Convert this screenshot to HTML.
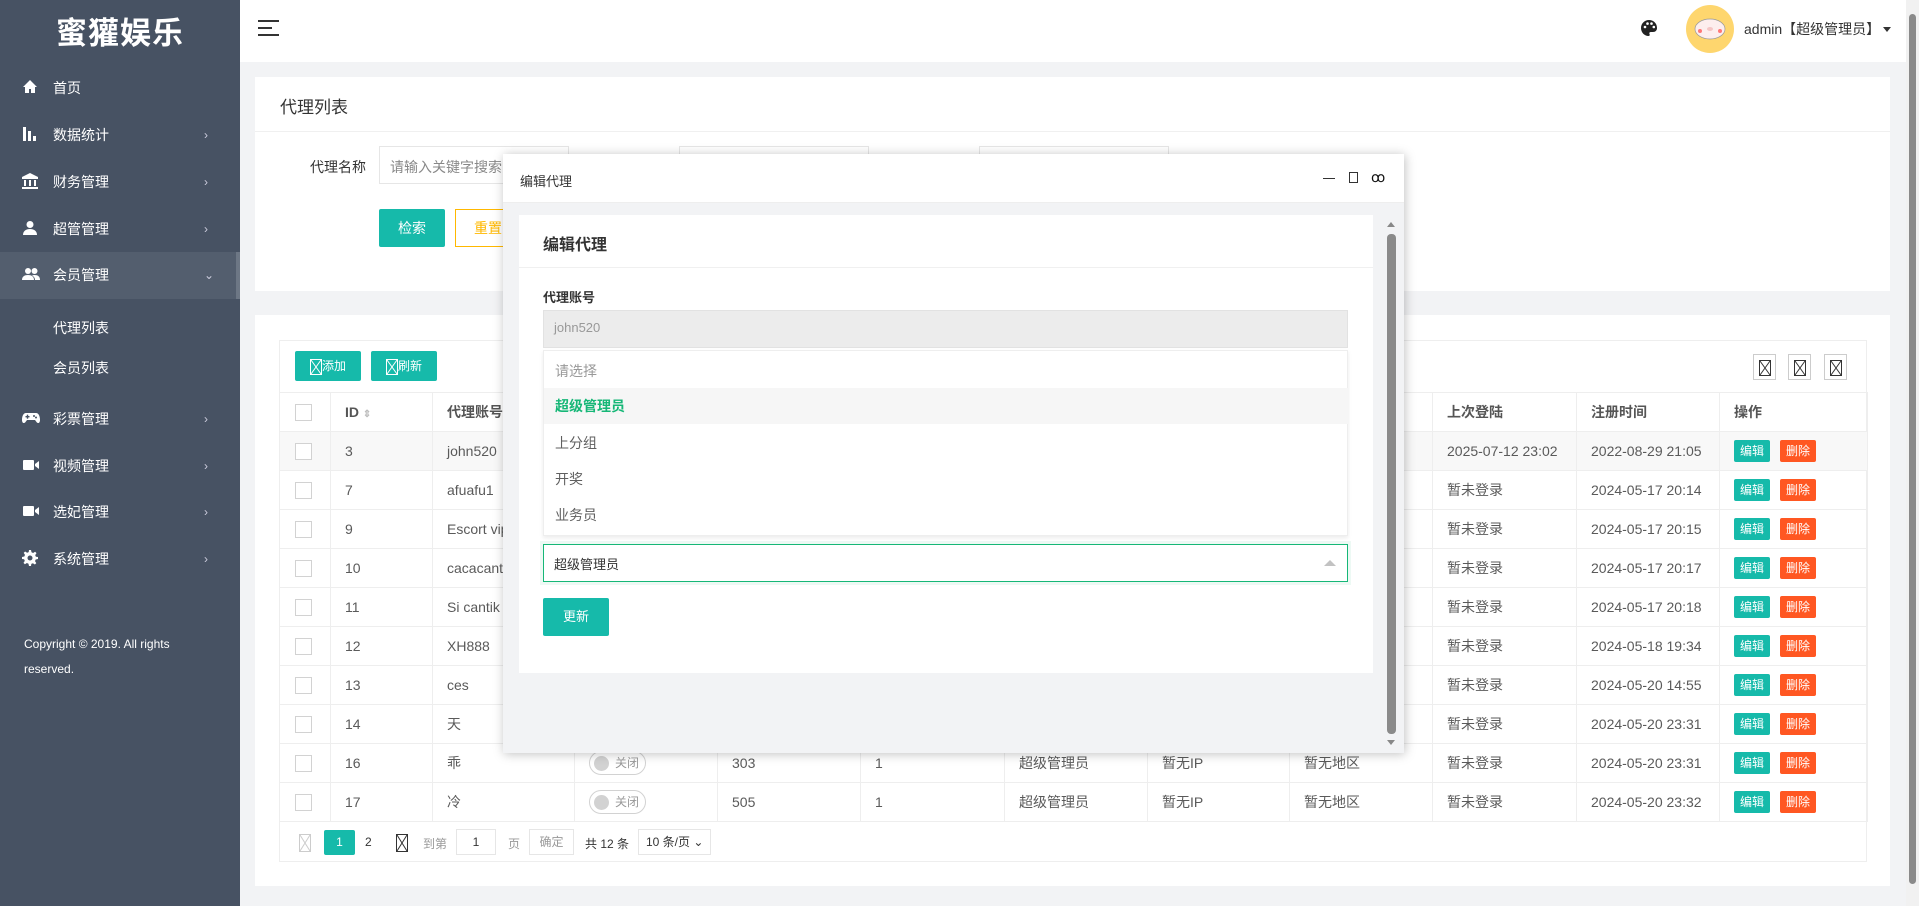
<!DOCTYPE html>
<html><head><meta charset="utf-8">
<style>
*{box-sizing:border-box;margin:0;padding:0}
body{width:1919px;height:906px;overflow:hidden;background:#f2f3f5;font-family:"Liberation Sans","Noto Sans CJK SC",sans-serif;font-size:14px;color:#333;position:relative}
.abs{position:absolute}
#side{left:0;top:0;width:240px;height:906px;background:#475263}
.logo{left:0;top:8px;width:240px;text-align:center;color:#fff;font-size:31px;font-weight:bold;letter-spacing:1px}
.mi{left:0;width:240px;height:47px;color:#fff;font-size:14px;line-height:47px}
.mi .t{position:absolute;left:53px}
.mi svg{position:absolute;left:22px;top:14px}
.mi .ch{position:absolute;left:204px;font-size:12px;color:#ccd}
.sub{left:53px;color:#fff;font-size:14px}
#hdr{left:240px;top:0;width:1666px;height:62px;background:#fff}
.card{background:#fff}
.inp{border:1px solid #e6e6e6;background:#fff;height:38px}
.btn{color:#fff;background:#16baaa;text-align:center;border-radius:2px}
table{border-collapse:collapse;position:absolute;left:279px;top:392px;width:1588px;table-layout:fixed}
td,th{border:1px solid #eee;height:39px;padding:0 14px;text-align:left;white-space:nowrap;overflow:hidden;font-size:14px;color:#5a5a5a}
th{font-weight:bold;color:#555;height:39px}
.cb{display:inline-block;width:17px;height:17px;border:1px solid #d2d2d2;background:#fff;vertical-align:middle}
.be{display:inline-block;width:36px;height:22px;line-height:22px;background:#16baaa;color:#fff;font-size:12px;text-align:center;border-radius:2px;margin-right:10px}
.bd{display:inline-block;width:36px;height:22px;line-height:22px;background:#ff5722;color:#fff;font-size:12px;text-align:center;border-radius:2px}
.sw{display:inline-block;width:57px;height:24px;border:1px solid #d2d2d2;border-radius:12px;position:relative;vertical-align:middle;font-size:12px;color:#999;line-height:22px;padding-left:25px}
.sw:before{content:"";position:absolute;left:4px;top:4px;width:15px;height:15px;border-radius:50%;background:#d2d2d2}
.bx{display:inline-block;width:12px;height:16px;vertical-align:middle}
.opt{left:0;width:805px;height:36px;line-height:36px;padding-left:11px;font-size:14px;color:#5f5f5f}
</style></head><body>

<div id="side" class="abs">
  <div class="abs logo">蜜獾娱乐</div>
  <div class="abs mi" style="top:65px"><svg width="16" height="16" viewBox="0 0 16 16"><path d="M8 1L1 8h2v6h4v-4h2v4h4V8h2z" fill="#fff"/></svg><span class="t">首页</span></div>
  <div class="abs mi" style="top:112px"><svg width="16" height="16" viewBox="0 0 16 16"><rect x="1" y="1" width="3" height="14" fill="#fff"/><rect x="6" y="5" width="3" height="10" fill="#fff"/><rect x="11" y="10" width="3" height="5" fill="#fff"/></svg><span class="t">数据统计</span><span class="ch">›</span></div>
  <div class="abs mi" style="top:159px"><svg width="16" height="16" viewBox="0 0 16 16"><path d="M8 0L0 4v2h16V4z" fill="#fff"/><rect x="2" y="7" width="2" height="6" fill="#fff"/><rect x="7" y="7" width="2" height="6" fill="#fff"/><rect x="12" y="7" width="2" height="6" fill="#fff"/><rect x="0" y="14" width="16" height="2" fill="#fff"/></svg><span class="t">财务管理</span><span class="ch">›</span></div>
  <div class="abs mi" style="top:206px"><svg width="16" height="16" viewBox="0 0 16 16"><circle cx="8" cy="4.5" r="3.5" fill="#fff"/><path d="M1 15c0-4 3-6 7-6s7 2 7 6z" fill="#fff"/></svg><span class="t">超管管理</span><span class="ch">›</span></div>
  <div class="abs mi" style="top:252px;background:#535e6e;border-right:4px solid #6d7785"><svg width="18" height="16" viewBox="0 0 18 16"><circle cx="6" cy="5" r="3" fill="#fff"/><circle cx="12.5" cy="5" r="3" fill="#fff"/><path d="M0 14c0-3.5 2.5-5 6-5s6 1.5 6 5z" fill="#fff"/><path d="M10 9.5c1-.4 1.8-.5 2.5-.5 3.5 0 5.5 1.5 5.5 5h-5c0-2-1-3.5-3-4.5z" fill="#fff"/></svg><span class="t">会员管理</span><span class="ch">⌄</span></div>
  <div class="abs sub" style="top:318px">代理列表</div>
  <div class="abs sub" style="top:358px">会员列表</div>
  <div class="abs mi" style="top:396px"><svg width="18" height="16" viewBox="0 0 18 16"><path d="M4 3h10c2.5 0 4 3 4 7 0 3-2 4-3.5 2L13 10H5l-1.5 2C2 14 0 13 0 10c0-4 1.5-7 4-7z" fill="#fff"/><rect x="3.5" y="6" width="4" height="1.4" fill="#475263"/><rect x="4.8" y="4.7" width="1.4" height="4" fill="#475263"/><circle cx="12" cy="6" r="1" fill="#475263"/><circle cx="14" cy="7.5" r="1" fill="#475263"/></svg><span class="t">彩票管理</span><span class="ch">›</span></div>
  <div class="abs mi" style="top:443px"><svg width="18" height="16" viewBox="0 0 18 16"><rect x="1" y="3" width="11" height="10" rx="1" fill="#fff"/><path d="M13 7l4-3v8l-4-3z" fill="#fff"/></svg><span class="t">视频管理</span><span class="ch">›</span></div>
  <div class="abs mi" style="top:489px"><svg width="18" height="16" viewBox="0 0 18 16"><rect x="1" y="3" width="11" height="10" rx="1" fill="#fff"/><path d="M13 7l4-3v8l-4-3z" fill="#fff"/></svg><span class="t">选妃管理</span><span class="ch">›</span></div>
  <div class="abs mi" style="top:536px"><svg width="16" height="16" viewBox="0 0 16 16"><path d="M7 0h2l.5 2.3 1.6.7 2-1.3 1.4 1.4-1.3 2 .7 1.6L16 7v2l-2.3.5-.7 1.6 1.3 2-1.4 1.4-2-1.3-1.6.7L9 16H7l-.5-2.3-1.6-.7-2 1.3-1.4-1.4 1.3-2-.7-1.6L0 9V7l2.3-.5.7-1.6-1.3-2 1.4-1.4 2 1.3 1.6-.7z" fill="#fff"/><circle cx="8" cy="8" r="2.5" fill="#475263"/></svg><span class="t">系统管理</span><span class="ch">›</span></div>
  <div class="abs" style="left:24px;top:632px;color:#fff;font-size:12px;line-height:25px;width:180px">Copyright © 2019. All rights reserved.</div>
</div>

<div id="hdr" class="abs">
  <svg class="abs" style="left:18px;top:19px" width="22" height="18"><rect y="1" width="21" height="2" fill="#333"/><rect y="8" width="14" height="2" fill="#333"/><rect y="15" width="21" height="2" fill="#333"/></svg>
  <svg class="abs" style="left:1400px;top:19px" width="18" height="18" viewBox="0 0 18 18"><path d="M9 1C4.5 1 1 4.5 1 9s3.5 8 7.5 8c1.2 0 1.5-1 1-2-.5-1 0-2 1.3-2H13c2.5 0 4-1.7 4-4C17 4.3 13.5 1 9 1z" fill="#222"/><circle cx="5" cy="8" r="1.3" fill="#fff"/><circle cx="7.5" cy="4.6" r="1.3" fill="#fff"/><circle cx="11.5" cy="4.6" r="1.3" fill="#fff"/><circle cx="13.8" cy="8" r="1.3" fill="#fff"/></svg>
  <div class="abs" style="left:1446px;top:5px;width:48px;height:48px;border-radius:50%;background:#fed66e"></div>
  <svg class="abs" style="left:1452px;top:15px" width="36" height="26"><ellipse cx="18" cy="14" rx="15" ry="10" fill="#fdeeee" stroke="#999" stroke-width=".7"/><circle cx="8" cy="16" r="2" fill="#f77"/><circle cx="28" cy="16" r="2" fill="#f77"/><ellipse cx="18" cy="14" rx="3" ry="2" fill="#f5c6c6"/></svg>
  <div class="abs" style="left:1504px;top:19px;font-size:14px;color:#333">admin【超级管理员】</div>
  <div class="abs" style="left:1643px;top:27px;width:0;height:0;border-left:4px solid transparent;border-right:4px solid transparent;border-top:5px solid #333"></div>
</div>
<div class="abs" style="left:1906px;top:0;width:13px;height:906px;background:#f1f1f1"></div>
<div class="abs" style="left:1909px;top:14px;width:7px;height:870px;background:#8a8a8a;border-radius:4px"></div>

<div class="abs card" style="left:255px;top:77px;width:1635px;height:214px">
  <div class="abs" style="left:25px;top:16px;font-size:17px;color:#333">代理列表</div>
  <div class="abs" style="left:0;top:54px;width:1635px;height:1px;background:#f0f0f0"></div>
  <div class="abs" style="left:55px;top:80px;color:#333">代理名称</div>
  <div class="abs inp" style="left:124px;top:69px;width:190px;padding:10px;color:#888">请输入关键字搜索</div>
  <div class="abs inp" style="left:424px;top:69px;width:190px"></div>
  <div class="abs inp" style="left:724px;top:69px;width:190px"></div>
  <div class="abs btn" style="left:124px;top:132px;width:66px;height:38px;line-height:38px">检索</div>
  <div class="abs" style="left:200px;top:132px;width:66px;height:38px;line-height:36px;border:1px solid #ffb800;color:#ffb800;text-align:center">重置</div>
</div>

<div class="abs card" style="left:255px;top:315px;width:1635px;height:571px"></div>
<div class="abs" style="left:279px;top:340px;width:1588px;height:522px;border:1px solid #eee;background:#fff"></div>
<div class="abs btn" style="left:295px;top:351px;width:66px;height:30px;line-height:30px;font-size:12px"><svg class="bx" viewBox="0 0 12 16"><rect x=".5" y=".5" width="11" height="15" fill="none" stroke="#fff"/><path d="M1 1l10 14M11 1L1 15" stroke="#fff"/></svg>添加</div>
<div class="abs btn" style="left:371px;top:351px;width:66px;height:30px;line-height:30px;font-size:12px"><svg class="bx" viewBox="0 0 12 16"><rect x=".5" y=".5" width="11" height="15" fill="none" stroke="#fff"/><path d="M1 1l10 14M11 1L1 15" stroke="#fff"/></svg>刷新</div>
<div class="abs" style="left:1753px;top:354px;width:23px;height:26px;border:1px solid #ccc;text-align:center;padding-top:4px"><svg class="bx" viewBox="0 0 12 16"><rect x=".5" y=".5" width="11" height="15" fill="none" stroke="#333"/><path d="M1 1l10 14M11 1L1 15" stroke="#333"/></svg></div>
<div class="abs" style="left:1788px;top:354px;width:23px;height:26px;border:1px solid #ccc;text-align:center;padding-top:4px"><svg class="bx" viewBox="0 0 12 16"><rect x=".5" y=".5" width="11" height="15" fill="none" stroke="#333"/><path d="M1 1l10 14M11 1L1 15" stroke="#333"/></svg></div>
<div class="abs" style="left:1824px;top:354px;width:23px;height:26px;border:1px solid #ccc;text-align:center;padding-top:4px"><svg class="bx" viewBox="0 0 12 16"><rect x=".5" y=".5" width="11" height="15" fill="none" stroke="#333"/><path d="M1 1l10 14M11 1L1 15" stroke="#333"/></svg></div>

<table>
<colgroup><col style="width:51px"><col style="width:102px"><col style="width:142px"><col style="width:143px"><col style="width:143px"><col style="width:144px"><col style="width:143px"><col style="width:142px"><col style="width:143px"><col style="width:144px"><col style="width:143px"><col style="width:148px"></colgroup>
<tr><th style="padding-left:15px"><span class="cb"></span></th><th>ID <span style="color:#bbb;font-size:10px">⇕</span></th><th>代理账号</th><th>状态</th><th>邀请码</th><th>层级</th><th>角色</th><th>登录IP</th><th>登录地区</th><th>上次登陆</th><th>注册时间</th><th>操作</th></tr>
<tr style="background:#f8f8f8"><td style="padding-left:15px"><span class="cb"></span></td><td>3</td><td>john520</td><td><span class="sw">关闭</span></td><td>101</td><td>1</td><td>超级管理员</td><td>暂无IP</td><td>暂无地区…</td><td>2025-07-12 23:02</td><td>2022-08-29 21:05</td><td><span class="be">编辑</span><span class="bd">删除</span></td></tr>
<tr><td style="padding-left:15px"><span class="cb"></span></td><td>7</td><td>afuafu1</td><td><span class="sw">关闭</span></td><td>101</td><td>1</td><td>超级管理员</td><td>暂无IP</td><td>暂无地区</td><td>暂未登录</td><td>2024-05-17 20:14</td><td><span class="be">编辑</span><span class="bd">删除</span></td></tr>
<tr><td style="padding-left:15px"><span class="cb"></span></td><td>9</td><td>Escort vip</td><td><span class="sw">关闭</span></td><td>101</td><td>1</td><td>超级管理员</td><td>暂无IP</td><td>暂无地区</td><td>暂未登录</td><td>2024-05-17 20:15</td><td><span class="be">编辑</span><span class="bd">删除</span></td></tr>
<tr><td style="padding-left:15px"><span class="cb"></span></td><td>10</td><td>cacacantik</td><td><span class="sw">关闭</span></td><td>101</td><td>1</td><td>超级管理员</td><td>暂无IP</td><td>暂无地区</td><td>暂未登录</td><td>2024-05-17 20:17</td><td><span class="be">编辑</span><span class="bd">删除</span></td></tr>
<tr><td style="padding-left:15px"><span class="cb"></span></td><td>11</td><td>Si cantik</td><td><span class="sw">关闭</span></td><td>101</td><td>1</td><td>超级管理员</td><td>暂无IP</td><td>暂无地区</td><td>暂未登录</td><td>2024-05-17 20:18</td><td><span class="be">编辑</span><span class="bd">删除</span></td></tr>
<tr><td style="padding-left:15px"><span class="cb"></span></td><td>12</td><td>XH888</td><td><span class="sw">关闭</span></td><td>101</td><td>1</td><td>超级管理员</td><td>暂无IP</td><td>暂无地区</td><td>暂未登录</td><td>2024-05-18 19:34</td><td><span class="be">编辑</span><span class="bd">删除</span></td></tr>
<tr><td style="padding-left:15px"><span class="cb"></span></td><td>13</td><td>ces</td><td><span class="sw">关闭</span></td><td>101</td><td>1</td><td>超级管理员</td><td>暂无IP</td><td>暂无地区</td><td>暂未登录</td><td>2024-05-20 14:55</td><td><span class="be">编辑</span><span class="bd">删除</span></td></tr>
<tr><td style="padding-left:15px"><span class="cb"></span></td><td>14</td><td>天</td><td><span class="sw">关闭</span></td><td>101</td><td>1</td><td>超级管理员</td><td>暂无IP</td><td>暂无地区</td><td>暂未登录</td><td>2024-05-20 23:31</td><td><span class="be">编辑</span><span class="bd">删除</span></td></tr>
<tr><td style="padding-left:15px"><span class="cb"></span></td><td>16</td><td>乖</td><td><span class="sw">关闭</span></td><td>303</td><td>1</td><td>超级管理员</td><td>暂无IP</td><td>暂无地区</td><td>暂未登录</td><td>2024-05-20 23:31</td><td><span class="be">编辑</span><span class="bd">删除</span></td></tr>
<tr><td style="padding-left:15px"><span class="cb"></span></td><td>17</td><td>冷</td><td><span class="sw">关闭</span></td><td>505</td><td>1</td><td>超级管理员</td><td>暂无IP</td><td>暂无地区</td><td>暂未登录</td><td>2024-05-20 23:32</td><td><span class="be">编辑</span><span class="bd">删除</span></td></tr>
</table>

<svg class="abs" style="left:299px;top:834px" width="12" height="18"><rect x=".5" y=".5" width="11" height="17" fill="none" stroke="#ccc"/><path d="M1 1l10 16M11 1L1 17" stroke="#ccc"/></svg>
<div class="abs btn" style="left:324px;top:830px;width:31px;height:25px;line-height:25px;font-size:12px">1</div>
<div class="abs" style="left:365px;top:835px;font-size:12px">2</div>
<svg class="abs" style="left:396px;top:834px" width="12" height="18"><rect x=".5" y=".5" width="11" height="17" fill="none" stroke="#333"/><path d="M1 1l10 16M11 1L1 17" stroke="#333"/></svg>
<div class="abs" style="left:423px;top:835px;font-size:12px;color:#999">到第</div>
<div class="abs" style="left:456px;top:829px;width:40px;height:26px;border:1px solid #e6e6e6;text-align:center;line-height:24px;font-size:12px">1</div>
<div class="abs" style="left:508px;top:835px;font-size:12px;color:#999">页</div>
<div class="abs" style="left:529px;top:829px;width:45px;height:26px;border:1px solid #e6e6e6;text-align:center;line-height:24px;font-size:12px;color:#999">确定</div>
<div class="abs" style="left:585px;top:835px;font-size:12px">共 12 条</div>
<div class="abs" style="left:638px;top:829px;width:73px;height:26px;border:1px solid #e6e6e6;line-height:24px;font-size:12px;padding-left:7px">10 条/页 ⌄</div>

<div class="abs" style="left:503px;top:154px;width:901px;height:599px;background:#f2f3f5;box-shadow:1px 1px 10px rgba(0,0,0,.25)">
  <div class="abs" style="left:0;top:0;width:901px;height:49px;background:#fff;border-bottom:1px solid #eee"></div>
  <div class="abs" style="left:17px;top:17px;font-size:13px;color:#333">编辑代理</div>
  <div class="abs" style="left:820px;top:24px;width:12px;height:1px;background:#333"></div>
  <div class="abs" style="left:846px;top:18px;width:9px;height:11px;border:1px solid #333"></div>
  <div class="abs" style="left:868px;top:15px;font-size:14px;color:#111">ꝏ</div>
  <div class="abs" style="left:884px;top:68px;width:0;height:0;border-left:4px solid transparent;border-right:4px solid transparent;border-bottom:5px solid #888"></div>
  <div class="abs" style="left:884px;top:586px;width:0;height:0;border-left:4px solid transparent;border-right:4px solid transparent;border-top:5px solid #888"></div>
  <div class="abs" style="left:884px;top:80px;width:9px;height:500px;background:#8a8a8a;border-radius:4px"></div>

  <div class="abs card" style="left:16px;top:61px;width:854px;height:458px">
    <div class="abs" style="left:24px;top:16px;font-size:16px;color:#333;font-weight:bold">编辑代理</div>
    <div class="abs" style="left:0;top:52px;width:854px;height:1px;background:#f0f0f0"></div>
    <div class="abs" style="left:24px;top:72px;font-size:13px;font-weight:bold;color:#333">代理账号</div>
    <div class="abs" style="left:24px;top:95px;width:805px;height:38px;background:#ececec;border:1px solid #e2e2e2;padding:9px 10px;color:#999;font-size:13px">john520</div>
    <div class="abs" style="left:24px;top:135px;width:805px;height:186px;background:#fff;border:1px solid #eee;box-shadow:0 2px 4px rgba(0,0,0,.08)">
      <div class="abs opt" style="top:2px;color:#999">请选择</div>
      <div class="abs opt" style="top:37px;background:#f6f6f6;color:#16b777;font-weight:bold">超级管理员</div>
      <div class="abs opt" style="top:74px">上分组</div>
      <div class="abs opt" style="top:110px">开奖</div>
      <div class="abs opt" style="top:146px">业务员</div>
    </div>
    <div class="abs" style="left:24px;top:329px;width:805px;height:38px;border:1px solid #16b777;box-shadow:0 0 0 3px rgba(22,183,119,.08);padding:9px 10px;font-size:13px;color:#333">超级管理员</div>
    <div class="abs" style="left:805px;top:345px;width:0;height:0;border-left:6px solid transparent;border-right:6px solid transparent;border-bottom:6px solid #c2c2c2"></div>
    <div class="abs btn" style="left:24px;top:383px;width:66px;height:38px;line-height:38px;font-size:13px">更新</div>
  </div>
</div>
</body></html>
